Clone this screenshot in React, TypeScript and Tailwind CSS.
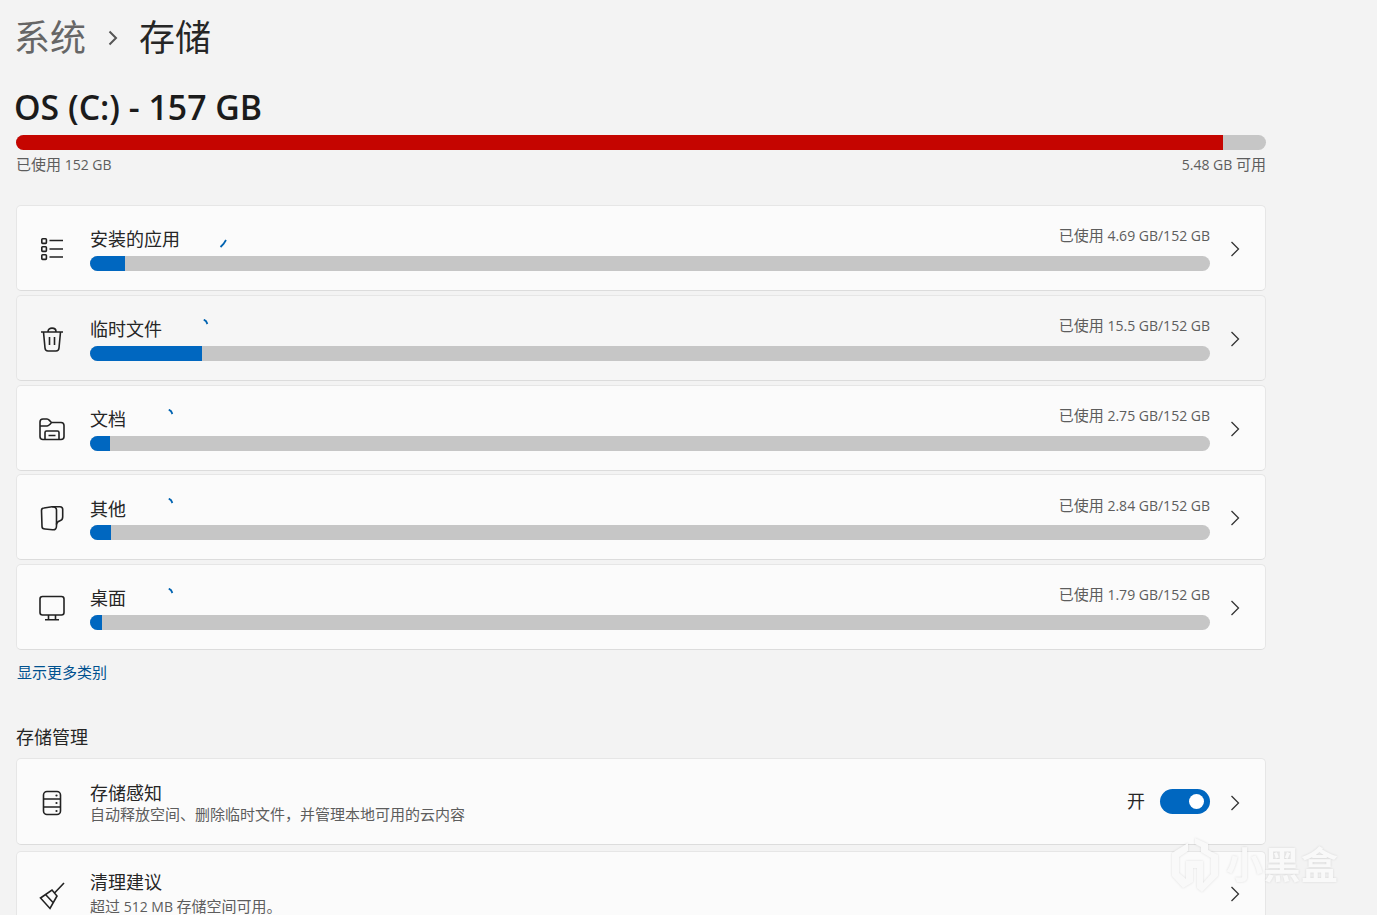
import React from 'react';

const font = { fontFamily: '"Open Sans", "Noto Sans CJK SC", sans-serif' };

const Chevron = () => (
  <svg width="10" height="16" viewBox="0 0 10 16" fill="none" stroke="#333" strokeWidth="1.3">
    <path d="M1.5 1 L8.5 8 L1.5 15" />
  </svg>
);

const ListIcon = () => (
  <svg width="24" height="24" viewBox="0 0 24 24" fill="none" stroke="#222" strokeWidth="1.6">
    <rect x="1.8" y="1.8" width="4.6" height="4.6" rx="0.8" />
    <rect x="1.8" y="9.8" width="4.6" height="4.6" rx="0.8" />
    <rect x="1.8" y="17.8" width="4.6" height="4.6" rx="0.8" />
    <path d="M9.5 3.5 H23 M9.5 12 H23 M9.5 20 H23" />
  </svg>
);

const TrashIcon = () => (
  <svg width="24" height="26" viewBox="0 0 24 26" fill="none" stroke="#222" strokeWidth="1.6">
    <path d="M1 6 H23 M8 5.5 C8 1 16 1 16 5.5 M3.5 6 L5 22 C5.2 24 6.3 25 8 25 H16 C17.7 25 18.8 24 19 22 L20.5 6 M9.5 11 V19 M14.5 11 V19" />
  </svg>
);

const FolderIcon = () => (
  <svg width="26" height="24" viewBox="0 0 26 24" fill="none" stroke="#222" strokeWidth="1.6">
    <path d="M1 5 C1 3 2 2 4 2 H8 C9.5 2 10 3 11 4 L12.5 5.5 H22 C24 5.5 25 6.5 25 8.5 V19.5 C25 21.5 24 22.5 22 22.5 H4 C2 22.5 1 21.5 1 19.5 Z M1 9 H8 C9.5 9 10.5 8 12.5 5.5" />
    <path d="M6 22.5 V15.5 C6 14.5 6.5 14 7.5 14 H18.5 C19.5 14 20 14.5 20 15.5 V22.5 M9.5 18.5 H16.5" />
  </svg>
);

const OtherIcon = () => (
  <svg width="24" height="26" viewBox="0 0 24 26" fill="none" stroke="#222" strokeWidth="1.6">
    <path d="M1.5 5.5 C1.5 4 2.5 3 4 3 L12 1.8 C15 1.6 16.5 3 16.5 5 V21 C16.5 24 15 25 12.5 24.7 L5 24 C3 24 2 23 2 21.5 Z" />
    <path d="M12 1.8 H20 C21.8 1.8 22.7 3 22.7 4.5 V12 C22.7 14.5 21.5 15.3 20 15.8 C18 16.5 16.5 17.5 16.5 19.5" />
  </svg>
);

const MonitorIcon = () => (
  <svg width="26" height="26" viewBox="0 0 26 26" fill="none" stroke="#222" strokeWidth="1.6">
    <rect x="1" y="1.5" width="24" height="18.5" rx="2.5" />
    <path d="M9.5 20 V24.5 M16.5 20 V24.5 M6 24.8 H20" />
  </svg>
);

const DriveIcon = () => (
  <svg width="20" height="26" viewBox="0 0 20 26" fill="none" stroke="#222" strokeWidth="1.6">
    <rect x="1.5" y="1.5" width="17" height="23" rx="3.5" />
    <path d="M1.5 9 H18.5 M1.5 17 H18.5" />
    <circle cx="14.5" cy="5.5" r="1.1" fill="#222" stroke="none" />
    <circle cx="14.5" cy="13" r="1.1" fill="#222" stroke="none" />
    <circle cx="14.5" cy="21" r="1.1" fill="#222" stroke="none" />
  </svg>
);

const BroomIcon = () => (
  <svg width="26" height="28" viewBox="0 0 26 28" fill="none" stroke="#222" strokeWidth="1.6">
    <path d="M25 1 L15.5 11 M1.5 16 L13 8 L18 14 L11 26.5 Z M6.5 12.5 L14.5 21" />
  </svg>
);

const Tick = ({ className }: { className: string }) => (
  <svg className={`absolute ${className}`} width="6" height="6" viewBox="0 0 6 6" fill="none" stroke="#0063b1" strokeWidth="1.8">
    <path d="M0.8 0.6 L3 2.2 L4.4 5" />
  </svg>
);

const rows = [
  { label: '安装的应用', used: '4.69 GB/152 GB', bar: 'w-[35px]', bg: 'bg-[#fbfbfb]', icon: <ListIcon />, tick: null },
  { label: '临时文件', used: '15.5 GB/152 GB', bar: 'w-[112px]', bg: 'bg-[#f6f6f6]', icon: <TrashIcon />, tick: 'left-[186px] top-[23px]' },
  { label: '文档', used: '2.75 GB/152 GB', bar: 'w-[20px]', bg: 'bg-[#fbfbfb]', icon: <FolderIcon />, tick: 'left-[151px] top-[23px]' },
  { label: '其他', used: '2.84 GB/152 GB', bar: 'w-[21px]', bg: 'bg-[#fbfbfb]', icon: <OtherIcon />, tick: 'left-[151px] top-[23px]' },
  { label: '桌面', used: '1.79 GB/152 GB', bar: 'w-[12px]', bg: 'bg-[#fbfbfb]', icon: <MonitorIcon />, tick: 'left-[151px] top-[23px]' },
];

const App = () => {
  return (
    <div className="relative h-[915px] w-[1377px] overflow-hidden bg-[#f3f3f3] text-[#262626]" style={font}>
      <div className="w-[1266px] pl-4">
        <div className="-ml-[2px] flex h-[76px] items-center text-[36px] font-normal">
          <span className="text-[#666666]">系统</span>
          <svg className="ml-[22px] mr-[21px]" width="10" height="16" viewBox="0 0 10 16" fill="none" stroke="#555" strokeWidth="2">
            <path d="M1.5 1.5 L8 8 L1.5 14.5" />
          </svg>
          <span>存储</span>
        </div>

        <h1 className="mt-[8px] -ml-[2px] h-[51px] text-[33.8px] leading-[46px] font-semibold text-[#1b1b1b]">OS (C:) - 157 GB</h1>
        <div className="flex h-[15px] overflow-hidden rounded-full bg-[#c6c6c6]">
          <div className="w-[1207px] bg-[#c50500]"></div>
        </div>
        <div className="mt-[4px] flex h-[20px] items-center justify-between text-[14px] text-[#5d5d5d]">
          <span><span className="text-[15px]">已使用</span> 152 GB</span>
          <span>5.48 GB <span className="text-[15px]">可用</span></span>
        </div>

        <div className="mt-[31.2px] flex flex-col gap-[3.75px]">
          {rows.map((row) => (
            <div key={row.label} className={`relative flex h-[86px] items-center rounded-[5px] border border-[#e6e6e6] border-b-[#dcdcdc] ${row.bg}`}>
              <div className="mr-[3px] flex w-[70px] shrink-0 justify-center pt-[2px]">{row.icon}</div>
              <div className="flex-1">
                <div className="flex h-[28px] items-start justify-between">
                  <span className="text-[18px] font-normal leading-[28px]">{row.label}</span>
                  <span className="text-[14px] leading-[20px] text-[#5d5d5d]"><span className="text-[15px]">已使用</span> {row.used}</span>
                </div>
                <div className="mt-[2.8px] h-[15px] overflow-hidden rounded-full bg-[#c6c6c6]">
                  <div className={`h-full bg-[#0067c0] ${row.bar}`}></div>
                </div>
              </div>
              <div className="flex w-[55px] shrink-0 justify-center pr-[5px] pt-[2px]"><Chevron /></div>
              {row.tick ? (
                <Tick className={row.tick} />
              ) : (
                <svg className="absolute left-[202px] top-[33px]" width="8" height="9" viewBox="0 0 8 9" fill="none" stroke="#0063b1" strokeWidth="1.8">
                  <path d="M7 1 L4.5 5 L1.5 8" />
                </svg>
              )}
            </div>
          ))}
        </div>

        <a className="mt-[12px] ml-px block h-[20px] text-[15px] leading-[20px] text-[#00518f]">显示更多类别</a>
        <h2 className="mt-[42px] h-[26px] text-[18px] leading-[26px] font-normal">存储管理</h2>

        <div className="mt-[8px] flex h-[87px] items-center rounded-[5px] border border-[#e6e6e6] border-b-[#dcdcdc] bg-[#fbfbfb]">
          <div className="mr-[3px] flex w-[70px] shrink-0 justify-center pt-[2px]"><DriveIcon /></div>
          <div className="flex-1">
            <div className="text-[18px] font-normal leading-[24px]">存储感知</div>
            <div className="text-[15px] leading-[18px] text-[#5d5d5d]">自动释放空间、删除临时文件，并管理本地可用的云内容</div>
          </div>
          <span className="mr-[15px] text-[18px] font-normal">开</span>
          <div className="flex h-[25px] w-[50px] items-center justify-end rounded-full bg-[#0067c0] pr-[6px]">
            <div className="h-[15px] w-[15px] rounded-full bg-white"></div>
          </div>
          <div className="flex w-[55px] shrink-0 justify-center pr-[5px] pt-[2px]"><Chevron /></div>
        </div>

        <div className="mt-[6px] flex h-[87px] items-center rounded-[5px] border border-[#e6e6e6] border-b-[#dcdcdc] bg-[#fbfbfb]">
          <div className="mr-[3px] flex w-[70px] shrink-0 justify-center pt-[3px]"><BroomIcon /></div>
          <div className="flex-1 pb-[4px]">
            <div className="text-[18px] font-normal leading-[24px]">清理建议</div>
            <div className="mt-[3px] text-[14px] leading-[18px] text-[#5d5d5d]"><span className="text-[15px]">超过</span> 512 MB <span className="text-[15px]">存储空间可用。</span></div>
          </div>
          <div className="flex w-[55px] shrink-0 justify-center pr-[5px] pb-[2px]"><Chevron /></div>
        </div>
      </div>

      {/* watermark */}
      <div className="absolute left-[1172px] top-[838px] flex items-center gap-[8px] drop-shadow-[0_0_1px_rgba(0,0,0,0.12)]">
        <svg width="46" height="54" viewBox="0 0 46 54" fill="#f9f9f9">
          <path d="M23 0 L36 6 L36 12 L46 17 L46 38 L30 54 L25 50 L25 30 L21 30 L21 44 L11 50 L0 38 L0 15 L16 5 L16 13 L7 19 L7 35 L14 41 L14 23 L31 23 L31 45 L39 36 L39 20 L29 14 L29 9 L23 6 Z" />
        </svg>
        <span className="text-[37px] font-bold leading-[44px] tracking-[0.5px] text-[#f9f9f9]">小黑盒</span>
      </div>
    </div>
  );
};

export default App;
